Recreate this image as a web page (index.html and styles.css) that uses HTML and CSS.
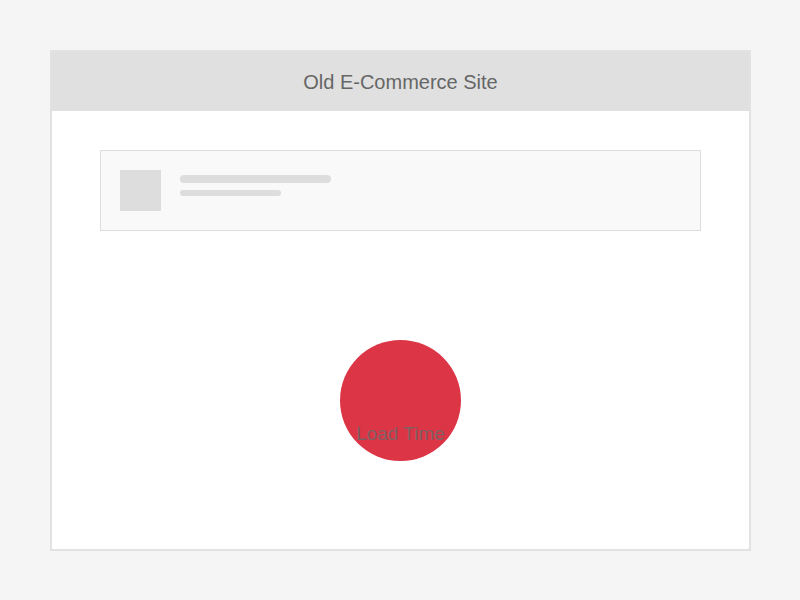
FILE: index.html
```html
<!DOCTYPE html>
<html>
<head>
<meta charset="utf-8">
<link rel="stylesheet" href="styles.css">
</head>
<body>
<div class="frame">
  <div class="header">Old E-Commerce Site</div>
  <div class="content">
    <div class="card">
      <div class="thumb"></div>
      <div class="lines">
        <div class="line line-long"></div>
        <div class="line line-short"></div>
      </div>
    </div>
    <div class="circle">
      <span class="label">Load Time</span>
    </div>
  </div>
</div>
</body>
</html>
```
FILE: styles.css
```css
html, body {
  margin: 0;
  padding: 0;
  background: #f5f5f5;
  font-family: "Liberation Sans", Arial, sans-serif;
}
body {
  width: 800px;
  height: 600px;
  padding: 50px 0 0 50px;
  box-sizing: border-box;
}
.frame {
  width: 701px;
  height: 501px;
  border: 2px solid #e2e2e2;
  box-sizing: border-box;
  background: #fff;
  display: flex;
  flex-direction: column;
}
.header {
  height: 59px;
  box-sizing: border-box;
  padding-top: 2px;
  background: #e0e0e0;
  display: flex;
  align-items: center;
  justify-content: center;
  font-size: 20px;
  color: #666;
  flex-shrink: 0;
}
.content {
  padding: 39px 48px 0 48px;
  display: flex;
  flex-direction: column;
  align-items: flex-start;
}
.card {
  width: 601px;
  height: 81px;
  box-sizing: border-box;
  border: 1px solid #dddddd;
  background: #f9f9f9;
  display: flex;
  align-items: flex-start;
  padding: 19px;
  gap: 19px;
}
.thumb {
  width: 41px;
  height: 41px;
  background: #dddddd;
  flex-shrink: 0;
}
.lines {
  display: flex;
  flex-direction: column;
  gap: 7px;
  padding-top: 5px;
}
.line {
  background: #dddddd;
  border-radius: 4px;
}
.line-long {
  width: 151px;
  height: 8px;
}
.line-short {
  width: 101px;
  height: 6px;
  border-radius: 3px;
}
.circle {
  margin-top: 109px;
  margin-left: 240px;
  width: 121px;
  height: 121px;
  border-radius: 50%;
  background: #dc3545;
  display: flex;
  flex-direction: column;
  align-items: center;
  padding-top: 84px;
  box-sizing: border-box;
}
.label {
  font-size: 19px;
  line-height: 20px;
  color: #6a6a6a;
  opacity: 0.8;
  white-space: nowrap;
}
```
